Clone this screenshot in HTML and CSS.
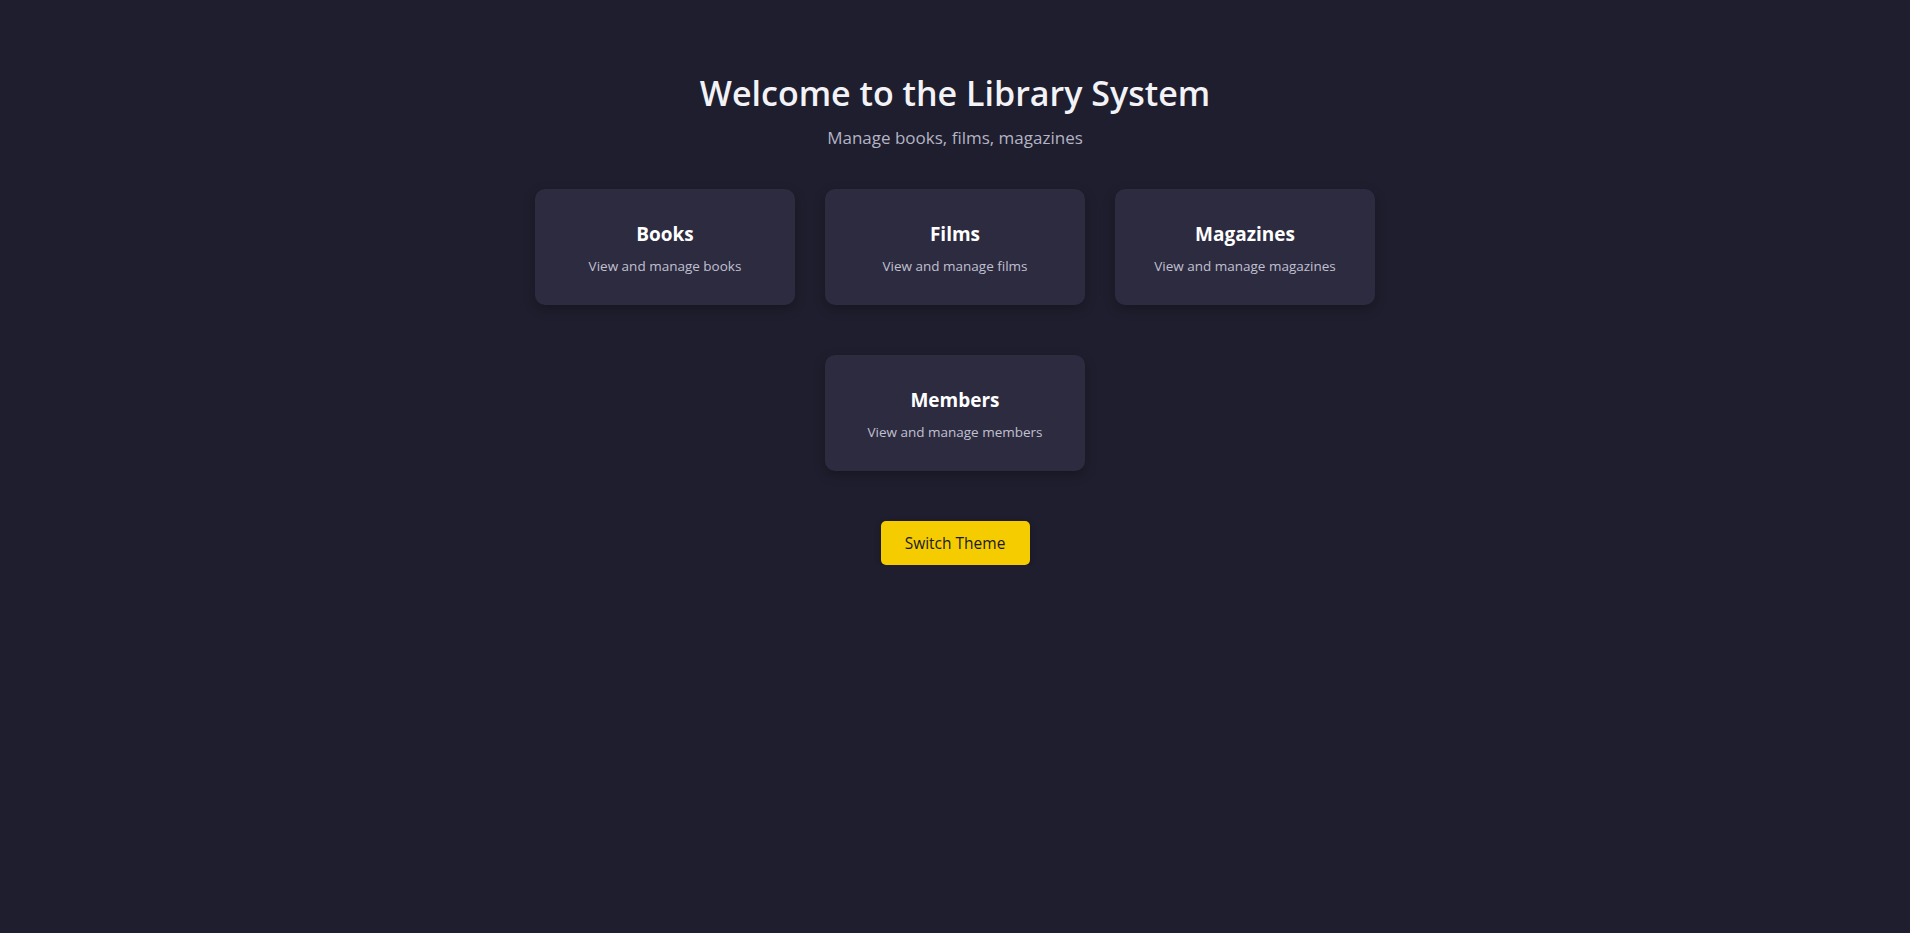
FILE: index.html
```html
<!DOCTYPE html>
<html lang="en">
<head>
<meta charset="utf-8">
<title>Library System</title>
<link rel="stylesheet" href="styles.css">
</head>
<body>
<main class="page">
  <header class="hero">
    <h1 class="hero-title">Welcome to the Library System</h1>
    <p class="hero-sub">Manage books, films, magazines</p>
  </header>
  <section class="cards">
    <a class="card" href="#books">
      <h2 class="card-title">Books</h2>
      <p class="card-desc">View and manage books</p>
    </a>
    <a class="card" href="#films">
      <h2 class="card-title">Films</h2>
      <p class="card-desc">View and manage films</p>
    </a>
    <a class="card" href="#magazines">
      <h2 class="card-title">Magazines</h2>
      <p class="card-desc">View and manage magazines</p>
    </a>
    <a class="card" href="#members">
      <h2 class="card-title">Members</h2>
      <p class="card-desc">View and manage members</p>
    </a>
  </section>
  <div class="actions">
    <button class="theme-btn" type="button">Switch Theme</button>
  </div>
</main>
</body>
</html>
```
FILE: styles.css
```css
* { box-sizing: border-box; }
html, body {
  margin: 0;
  padding: 0;
  background: #1e1e2e;
  min-height: 100%;
}
body {
  font-family: "Open Sans", "Noto Sans", sans-serif;
  color: #f0f0f5;
}
.page {
  display: flex;
  flex-direction: column;
  align-items: center;
  padding-top: 73px;
}
.hero {
  text-align: center;
}
.hero-title {
  margin: 0;
  font-size: 34px;
  font-weight: 600;
  line-height: 1.2;
  color: #f2f2f7;
}
.hero-sub {
  margin: 12px 0 0;
  font-size: 17px;
  color: #b4b4c4;
}
.cards {
  display: flex;
  flex-wrap: wrap;
  justify-content: center;
  column-gap: 30px;
  row-gap: 50px;
  width: 840px;
  margin-top: 40px;
}
.card {
  width: 260px;
  height: 116px;
  padding-top: 3px;
  background: #2d2b40;
  border-radius: 10px;
  box-shadow: 0 4px 12px rgba(0, 0, 0, 0.25);
  display: flex;
  flex-direction: column;
  align-items: center;
  justify-content: center;
  text-decoration: none;
  color: inherit;
}
.card-title {
  margin: 0;
  font-size: 19px;
  font-weight: 700;
  color: #ffffff;
}
.card-desc {
  margin: 10px 0 0;
  font-size: 13.5px;
  color: #c0c0d0;
}
.actions {
  margin-top: 50px;
}
.theme-btn {
  width: 149px;
  height: 44px;
  border: 0;
  border-radius: 5px;
  background: #f5cc00;
  color: #1a1a28;
  font-family: inherit;
  font-size: 15.5px;
  box-shadow: 0 2px 6px rgba(0, 0, 0, 0.3);
  cursor: pointer;
}
```
